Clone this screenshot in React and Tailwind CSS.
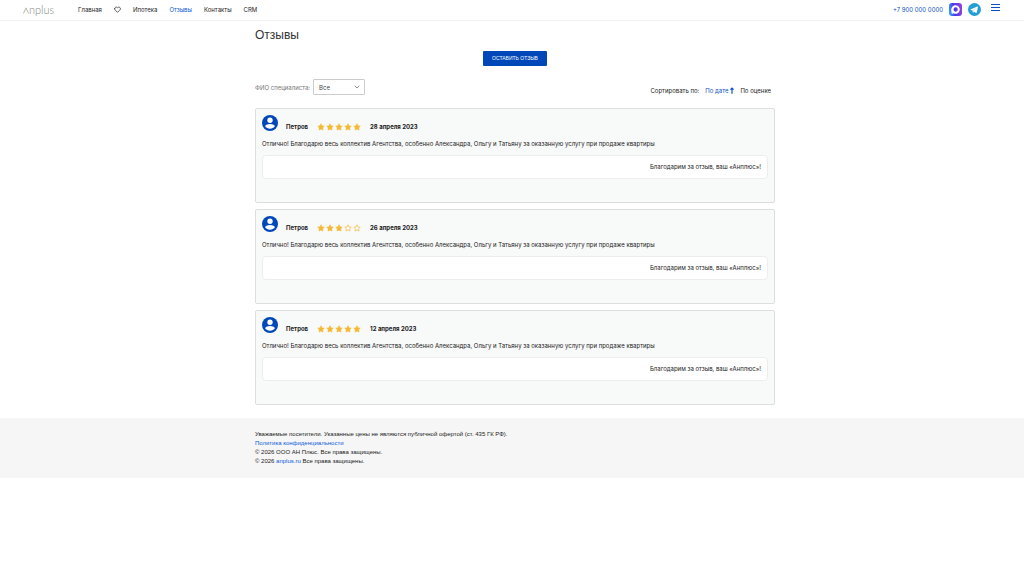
import { ChevronDown, Heart } from 'lucide-react';

const reviews = [
  { id: 1, name: 'Петров', rating: 5, date: '28 апреля 2023' },
  { id: 2, name: 'Петров', rating: 3, date: '26 апреля 2023' },
  { id: 3, name: 'Петров', rating: 5, date: '12 апреля 2023' },
];

const reviewText =
  'Отлично! Благодарю весь коллектив Агентства, особенно Александра, Ольгу и Татьяну за оказанную услугу при продаже квартиры';

function Logo() {
  return (
    <a href="#" aria-label="Anplus" className="flex items-center w-[55px] text-[#888] font-['Lato',sans-serif] font-light text-[11px]">
      <svg viewBox="0 0 8 8" className="w-[6px] h-[7px]" fill="none" stroke="currentColor" strokeWidth="0.8">
        <path d="M0.5 8 L4 0.5 L7.5 8" />
      </svg>
      <span>nplus</span>
    </a>
  );
}

function MaxIcon() {
  return (
    <svg viewBox="0 0 26 26" className="size-[13px]">
      <defs>
        <linearGradient id="max" x1="0" y1="0.6" x2="1" y2="0.4">
          <stop offset="0" stopColor="#28a5f5" />
          <stop offset="0.4" stopColor="#4a35ea" />
          <stop offset="1" stopColor="#9843dc" />
        </linearGradient>
      </defs>
      <rect width="26" height="26" rx="6" fill="url(#max)" />
      <path
        fill="#fff"
        fillRule="evenodd"
        d="M13.3 4.5a8.5 8.5 0 1 1-4.4 15.9c-1.2 1-3.2 1.8-3.5.6-.6-2.4-1-4.7-1-8a8.7 8.7 0 0 1 8.9-8.5zm0 4.2a4.3 4.3 0 1 0 0 8.6 4.3 4.3 0 0 0 0-8.6z"
      />
    </svg>
  );
}

function TelegramIcon() {
  return (
    <svg viewBox="0 0 26 26" className="size-[13px]">
      <circle cx="13" cy="13" r="13" fill="#229fd3" />
      <path fill="#fff" d="M4.8 12.8 18.6 7.2c.8-.3 1.4.2 1.2 1.2l-2.4 11c-.2.8-.7 1-1.4.6l-3.5-2.6-1.8 1.7c-.3.3-.6.4-.7-.1l-1.2-4.2-3.9-1.2c-.8-.2-.8-.6-.1-.8z" />
      <path fill="#b9dcec" d="m9.4 14.4 7.3-4.7-5.6 5.5-.6 3.4z" />
    </svg>
  );
}

function Avatar() {
  return (
    <svg viewBox="0 0 32 32" className="size-4">
      <circle cx="16" cy="16" r="16" fill="#0048b9" />
      <circle cx="16" cy="10.5" r="5.3" fill="#fff" />
      <path fill="#fff" d="M16 18c5.5 0 9.8 2.2 9.8 4.5-2 3-5.5 5-9.8 5s-7.8-2-9.8-5c0-2.3 4.3-4.5 9.8-4.5z" />
    </svg>
  );
}

function Star({ filled }) {
  return (
    <svg viewBox="0 0 24 24" className="size-2">
      <path
        d="M12 2.5l2.9 6.2 6.8.9-5 4.7 1.3 6.8L12 17.8l-6 3.3 1.3-6.8-5-4.7 6.8-.9z"
        fill={filled ? '#f5b82e' : 'none'}
        stroke="#f5b82e"
        strokeWidth="2"
        strokeLinejoin="round"
      />
    </svg>
  );
}

function SortArrow() {
  return (
    <svg viewBox="0 0 8 14" className="w-1 h-[7px]" fill="none" stroke="currentColor" strokeWidth="2.4">
      <path d="M4 13.5V2M0.8 5.2 4 2l3.2 3.2" />
    </svg>
  );
}

function Header() {
  return (
    <header className="flex justify-between h-[21px] pl-[23px] pr-6 border-b border-[#f2f2f2]">
      <nav className="flex items-center h-5 text-[#222]">
        <Logo />
        <div className="flex items-center gap-3 pb-px">
          <a href="#">Главная</a>
          <a href="#" aria-label="Избранное">
            <Heart className="size-[7px]" strokeWidth={2.5} />
          </a>
          <a href="#">Ипотека</a>
          <a href="#" className="text-[#0d5bdd]">Отзывы</a>
          <a href="#">Контакты</a>
          <a href="#">CRM</a>
        </div>
      </nav>
      <div className="flex items-center gap-[6px] h-[18px] text-[#0d4fc4]">
        <a href="tel:+79000000000" className="pt-px">+7 900 000 0000</a>
        <a href="#" aria-label="MAX"><MaxIcon /></a>
        <a href="#" aria-label="Telegram"><TelegramIcon /></a>
        <button type="button" aria-label="Меню" className="flex flex-col gap-[2px] w-[9px] ml-1 mb-[3px]">
          <span className="h-px w-full bg-[#0d4fc4]" />
          <span className="h-px w-full bg-[#0d4fc4]" />
          <span className="h-px w-full bg-[#0d4fc4]" />
        </button>
      </div>
    </header>
  );
}

function Review({ review }) {
  return (
    <article className="h-[95px] px-[6px] pt-[6px] bg-[#f8f9f9] border border-[#dcdfdf] rounded-[2px] leading-[10px]">
      <div className="flex items-start font-bold">
        <Avatar />
        <span className="ml-2 mt-[7px]">{review.name}</span>
        <div className="flex gap-px ml-[9px] mt-2" role="img" aria-label={`Оценка: ${review.rating} из 5`}>
          {[1, 2, 3, 4, 5].map((n) => (
            <Star key={n} filled={n <= review.rating} />
          ))}
        </div>
        <time className="ml-[9px] mt-[7px]">{review.date}</time>
      </div>
      <p className="mt-[7px]">{reviewText}</p>
      <p className="mt-[6px] px-[6px] py-[6px] bg-white border border-[#eceeee] rounded text-right">
        Благодарим за отзыв, ваш «Анплюс»!
      </p>
    </article>
  );
}

export default function App() {
  return (
    <div className="min-h-screen bg-white text-[#222] font-['Inter','Liberation_Sans',sans-serif] text-[6px]">
      <Header />

      <main className="pl-[6px] pb-[13px]">
        <div className="max-w-[520px] mx-auto">
          <h1 className="pt-[6px] font-['Liberation_Sans',sans-serif] text-[12px] leading-4 text-[#333]">Отзывы</h1>

          <div className="flex justify-center mt-2">
            <button type="button" className="h-[15px] px-[9px] bg-[#0048b9] rounded-[1px] text-white font-['Liberation_Sans',sans-serif] text-[5px] uppercase">
              Оставить отзыв
            </button>
          </div>

          <div className="flex items-center justify-between mt-[13px]">
            <div className="flex items-center gap-[3px] text-[#777]">
              <label htmlFor="specialist">ФИО специалиста:</label>
              <div className="relative">
                <select id="specialist" className="appearance-none block w-[52px] h-4 pl-[5px] bg-white border border-[#ccc] rounded-[1px] text-[#444]">
                  <option>Все</option>
                </select>
                <ChevronDown className="absolute right-1 top-1 size-2 pointer-events-none" strokeWidth={2.5} />
              </div>
            </div>
            <div className="flex items-center gap-[6px] pt-[6px] pr-1">
              <span>Сортировать по:</span>
              <button type="button" className="flex items-center gap-[2px] text-[#0d4fc4]">
                По дате
                <SortArrow />
              </button>
              <button type="button">По оценке</button>
            </div>
          </div>

          <div className="flex flex-col gap-[6px] mt-[13px]">
            {reviews.map((review) => (
              <Review key={review.id} review={review} />
            ))}
          </div>
        </div>
      </main>

      <footer className="pl-[6px] py-3 bg-[#f6f6f6] font-['Liberation_Sans',sans-serif] leading-[9px]">
        <div className="max-w-[520px] mx-auto">
          <p>Уважаемые посетители. Указанные цены не являются публичной офертой (ст. 435 ГК РФ).</p>
          <p><a href="#" className="text-[#0d5bdd]">Политика конфиденциальности</a></p>
          <p>© 2026 ООО АН Плюс. Все права защищены.</p>
          <p>© 2026 <a href="#" className="text-[#0d5bdd]">anplus.ru</a> Все права защищены.</p>
        </div>
      </footer>
    </div>
  );
}
